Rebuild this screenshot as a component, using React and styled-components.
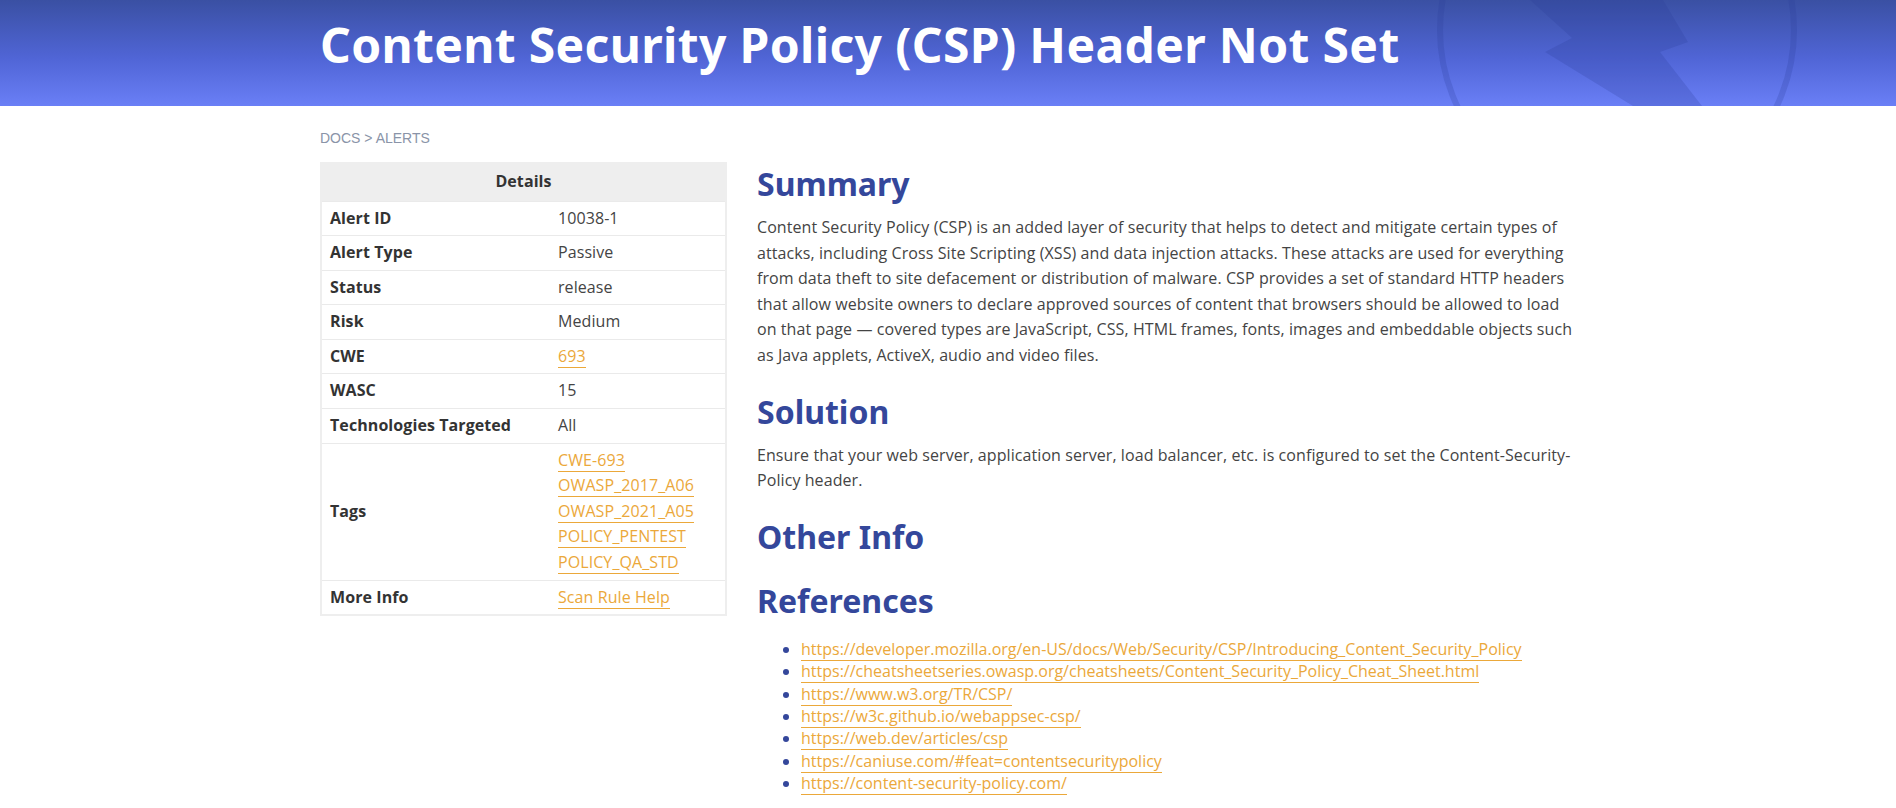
import React from "react";
import styled, { createGlobalStyle } from "styled-components";

const Global = createGlobalStyle`
  html, body { margin: 0; padding: 0; background: #fff; }
  body { font-family: "Open Sans", "Noto Sans", sans-serif; color: #444; }
  * { box-sizing: border-box; }
`;

const Hero = styled.header`
  position: relative;
  height: 106px;
  overflow: hidden;
  background: linear-gradient(180deg, #3a50a3 0%, #5065d6 55%, #6a7ff6 100%);
`;

const HeroArt = styled.svg`
  position: absolute;
  left: 0;
  top: 0;
  width: 100%;
  height: 106px;
  pointer-events: none;
`;

const HeroInner = styled.div`
  position: relative;
  width: 1256px;
  margin: 0 auto;
  padding-top: 14px;
`;

const Title = styled.h1`
  margin: 0;
  font-family: "Noto Sans", "Open Sans", sans-serif;
  font-weight: 700;
  font-size: 48px;
  line-height: 62px;
  color: #fff;
  letter-spacing: 0.35px;
`;

const Container = styled.div`
  width: 1256px;
  margin: 0 auto;
  padding: 23px 0 40px;
`;

const Crumbs = styled.nav`
  font-family: "Liberation Sans", Arial, sans-serif;
  font-size: 14px;
  line-height: 18px;
  color: #8a94a8;
  text-transform: uppercase;
  margin-bottom: 15px;
`;

const Layout = styled.div`
  display: grid;
  grid-template-columns: 407px 1fr;
  column-gap: 30px;
  align-items: start;
`;

const Table = styled.table`
  width: 407px;
  border-collapse: collapse;
  border: 2px solid #eee;
  font-size: 16px;
  line-height: 1.6;
  letter-spacing: 0.08px;
  table-layout: fixed;
`;

const Col = styled.col`
  width: ${(p) => p.$w};
`;

const HeadCell = styled.th`
  background: #eee;
  color: #333;
  font-weight: 700;
  text-align: center;
  height: 38px;
  padding: 0 8px;
`;

const Row = styled.tr`
  border-top: 1px solid #eaeaea;
`;

const Label = styled.td`
  padding: 4px 8px;
  font-weight: 700;
  color: #333;
  vertical-align: middle;
  white-space: nowrap;
`;

const Value = styled.td`
  padding: 4px 8px;
  color: #444;
  vertical-align: middle;
`;

const Link = styled.a`
  color: #eba83a;
  text-decoration: none;
  border-bottom: 1px solid #eba83a;
`;

const Main = styled.main`
  min-width: 0;
`;

const Heading = styled.h2`
  margin: 24px 0 12px;
  font-family: "Noto Sans", "Open Sans", sans-serif;
  font-weight: 700;
  font-size: 32px;
  line-height: 38px;
  color: #34479b;
  &:first-child { margin-top: 3px; }
  & + & { margin-top: 26px; }
`;

const Para = styled.p`
  margin: 0;
  font-size: 16px;
  line-height: 1.6;
  letter-spacing: 0.08px;
  color: #444;
`;

const RefList = styled.ul`
  margin: 18px 0 0;
  padding-left: 44px;
  font-size: 16px;
  line-height: 1.4;
  color: #34479b;
`;

const Details = [
  ["Alert ID", "10038-1"],
  ["Alert Type", "Passive"],
  ["Status", "release"],
  ["Risk", "Medium"],
  ["CWE", <Link href="#">693</Link>],
  ["WASC", "15"],
  ["Technologies Targeted", "All"],
  [
    "Tags",
    <>
      <Link href="#">CWE-693</Link>
      <br />
      <Link href="#">OWASP_2017_A06</Link>
      <br />
      <Link href="#">OWASP_2021_A05</Link>
      <br />
      <Link href="#">POLICY_PENTEST</Link>
      <br />
      <Link href="#">POLICY_QA_STD</Link>
    </>,
  ],
  ["More Info", <Link href="#">Scan Rule Help</Link>],
];

const Refs = [
  "https://developer.mozilla.org/en-US/docs/Web/Security/CSP/Introducing_Content_Security_Policy",
  "https://cheatsheetseries.owasp.org/cheatsheets/Content_Security_Policy_Cheat_Sheet.html",
  "https://www.w3.org/TR/CSP/",
  "https://w3c.github.io/webappsec-csp/",
  "https://web.dev/articles/csp",
  "https://caniuse.com/#feat=contentsecuritypolicy",
  "https://content-security-policy.com/",
];

export default function App() {
  return (
    <>
      <Global />
      <Hero>
        <HeroArt viewBox="0 0 1896 106" preserveAspectRatio="xMidYMid slice">
          <circle cx="1617" cy="30" r="177" fill="none" stroke="rgba(40,60,150,0.22)" strokeWidth="6" />
          <polygon
            points="1530,0 1663,0 1688,42 1660,52 1702,106 1633,106 1545,52 1572,38"
            fill="rgba(40,60,150,0.22)"
          />
        </HeroArt>
        <HeroInner>
          <Title>Content Security Policy (CSP) Header Not Set</Title>
        </HeroInner>
      </Hero>
      <Container>
        <Crumbs>Docs &gt; Alerts</Crumbs>
        <Layout>
          <aside>
            <Table>
              <colgroup>
                <Col $w="229px" />
                <Col $w="auto" />
              </colgroup>
              <thead>
                <tr>
                  <HeadCell colSpan={2}>Details</HeadCell>
                </tr>
              </thead>
              <tbody>
                {Details.map(([k, v]) => (
                  <Row key={k}>
                    <Label>{k}</Label>
                    <Value>{v}</Value>
                  </Row>
                ))}
              </tbody>
            </Table>
          </aside>
          <Main>
            <Heading>Summary</Heading>
            <Para>
              Content Security Policy (CSP) is an added layer of security that helps to detect and mitigate certain
              types of attacks, including Cross Site Scripting (XSS) and data injection attacks. These attacks are used
              for everything from data theft to site defacement or distribution of malware. CSP provides a set of
              standard HTTP headers that allow website owners to declare approved sources of content that browsers
              should be allowed to load on that page — covered types are JavaScript, CSS, HTML frames, fonts, images
              and embeddable objects such as Java applets, ActiveX, audio and video files.
            </Para>
            <Heading>Solution</Heading>
            <Para>
              Ensure that your web server, application server, load balancer, etc. is configured to set the
              Content-Security-Policy header.
            </Para>
            <Heading>Other Info</Heading>
            <Heading>References</Heading>
            <RefList>
              {Refs.map((r) => (
                <li key={r}>
                  <Link href="#">{r}</Link>
                </li>
              ))}
            </RefList>
          </Main>
        </Layout>
      </Container>
    </>
  );
}
